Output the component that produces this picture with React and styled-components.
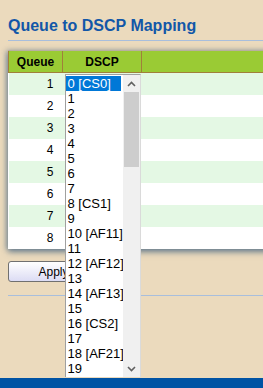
import React from "react";
import styled, { createGlobalStyle } from "styled-components";

const GlobalStyle = createGlobalStyle`
  html, body {
    margin: 0;
    padding: 0;
    background: #ebdabd;
    font-family: "Liberation Sans", Arial, sans-serif;
    overflow: hidden;
  }
`;

const Page = styled.div`
  min-height: 100vh;
  display: flex;
  flex-direction: column;
`;

const Content = styled.div`
  padding-left: 8px;
`;

const Title = styled.h1`
  margin: 0;
  padding-top: 16px;
  font-size: 16px;
  line-height: 20px;
  font-weight: bold;
  color: #1257a8;
`;

const Rule = styled.div`
  height: 1px;
  background: #a8bedc;
  margin-top: ${(p) => p.$top}px;
`;

const Panel = styled.div`
  margin-top: 9px;
  width: 300px;
  background: #fff;
  border-top: 1px solid #b8b0a0;
  box-shadow: 0 3px 6px rgba(70, 100, 130, 0.75), -2px 0 5px rgba(70, 100, 130, 0.35);
`;

const Table = styled.table`
  border-collapse: collapse;
  width: 100%;
  font-size: 12px;
`;

const Th = styled.th`
  background: #9acb34;
  height: 21px;
  padding: 0;
  border: 1px solid #a0803a;
  border-top: none;
  width: ${(p) => p.$w || "auto"};
  font-weight: bold;
  color: #000;
  text-align: center;
`;

const Tr = styled.tr`
  background: ${(p) => (p.$odd ? "#e4f8e4" : "#ffffff")};
`;

const Td = styled.td`
  height: 22px;
  padding: 0 9px 0 0;
  text-align: ${(p) => p.$align || "left"};
  position: relative;
`;

const Apply = styled.button`
  margin-top: 12px;
  width: 91px;
  height: 21px;
  border: 1px solid #707070;
  border-radius: 3px;
  background: linear-gradient(#ffffff, #dcdcf4);
  font-family: "Liberation Sans", Arial, sans-serif;
  font-size: 12px;
  color: #000;
  padding: 0;
`;

const Footer = styled.div`
  margin-top: auto;
  height: 10px;
  background: #0053a4;
  position: relative;
  z-index: 3;
`;

const Listbox = styled.div`
  position: absolute;
  left: 2px;
  top: 1px;
  width: 76px;
  height: 303px;
  background: #fff;
  border: 1px solid #a0a0a0;
  border-right-color: #dadada;
  border-bottom: none;
  box-sizing: border-box;
  display: flex;
  z-index: 2;
  text-align: left;
`;

const Items = styled.div`
  flex: 1;
  padding-top: 1px;
  overflow: hidden;
`;

const Item = styled.div`
  height: 15px;
  line-height: 15px;
  font-size: 13px;
  padding-left: 2px;
  margin-right: 2px;
  white-space: nowrap;
  color: ${(p) => (p.$sel ? "#fff" : "#000")};
  background: ${(p) => (p.$sel ? "#0078d7" : "transparent")};
`;

const Scrollbar = styled.div`
  width: 17px;
  background: #f0f0f0;
  display: flex;
  flex-direction: column;
  align-items: center;
`;

const Arrow = styled.div`
  height: 17px;
  width: 17px;
  display: flex;
  align-items: center;
  justify-content: center;
`;

const Thumb = styled.div`
  width: 15px;
  height: 75px;
  background: #cdcdcd;
`;

const Spacer = styled.div`
  flex: 1;
`;

const labels = {
  0: "CS0",
  8: "CS1",
  10: "AF11",
  12: "AF12",
  14: "AF13",
  16: "CS2",
  18: "AF21",
};

const Chevron = ({ up }) => (
  <svg width="9" height="6" viewBox="0 0 9 6">
    <path
      d={up ? "M1 5 L4.5 1.5 L8 5" : "M1 1 L4.5 4.5 L8 1"}
      fill="none"
      stroke="#606060"
      strokeWidth="1.6"
    />
  </svg>
);

export default function App() {
  const items = Array.from({ length: 20 }, (_, i) =>
    labels[i] ? `${i} [${labels[i]}]` : `${i}`
  );

  return (
    <Page>
      <GlobalStyle />
      <Content>
        <Title>Queue to DSCP Mapping</Title>
        <Rule $top={4} />
        <Panel>
          <Table>
            <thead>
              <tr>
                <Th $w="53px">Queue</Th>
                <Th $w="78px">DSCP</Th>
                <Th style={{ borderRight: "none" }} />
              </tr>
            </thead>
            <tbody>
              {Array.from({ length: 8 }, (_, i) => (
                <Tr key={i} $odd={i % 2 === 0}>
                  <Td $align="right">{i + 1}</Td>
                  <Td>
                    {i === 0 && (
                      <Listbox>
                        <Items>
                          {items.map((t, j) => (
                            <Item key={j} $sel={j === 0}>
                              {t}
                            </Item>
                          ))}
                        </Items>
                        <Scrollbar>
                          <Arrow>
                            <Chevron up />
                          </Arrow>
                          <Thumb />
                          <Spacer />
                          <Arrow>
                            <Chevron />
                          </Arrow>
                        </Scrollbar>
                      </Listbox>
                    )}
                  </Td>
                  <Td />
                </Tr>
              ))}
            </tbody>
          </Table>
        </Panel>
        <Apply>Apply</Apply>
        <Rule $top={13} />
      </Content>
      <Footer />
    </Page>
  );
}
